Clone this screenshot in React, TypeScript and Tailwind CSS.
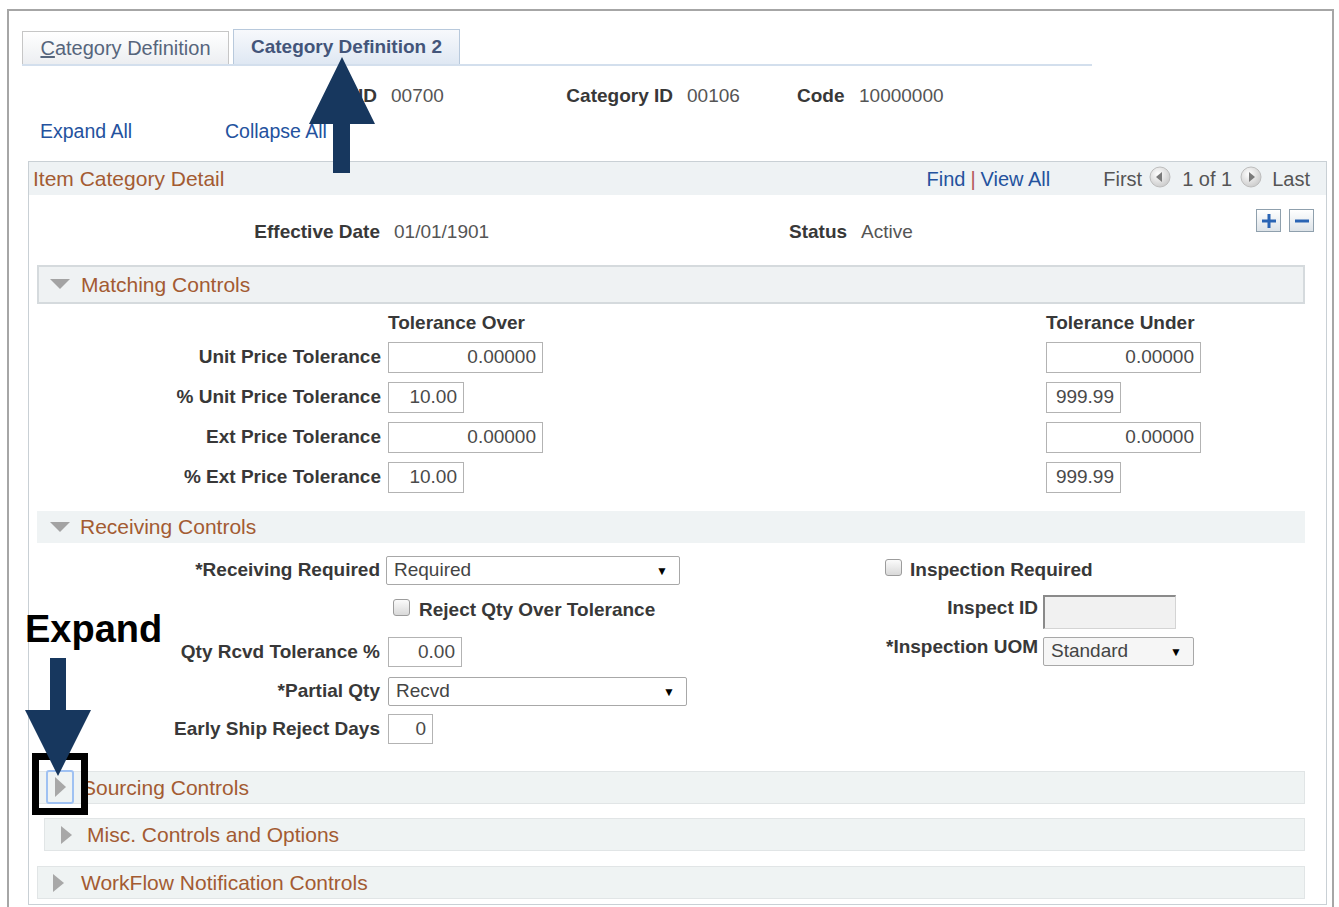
import React from "react";

const SECTION = "text-[#a35b32]";
const LINK = "text-[#24529e]";

function DownTri() {
  return (
    <svg width="20" height="11" viewBox="0 0 20 11" className="shrink-0">
      <polygon points="0,0 20,0 10,10" fill="#a3a3a3" />
    </svg>
  );
}

function RightTri({ h = 20 }: { h?: number }) {
  return (
    <svg width="11" height={h} viewBox={`0 0 11 ${h}`} className="shrink-0">
      <polygon points={`0,0 11,${h / 2} 0,${h}`} fill="#a8a8a8" />
    </svg>
  );
}

function NavCircle({ dir }: { dir: "left" | "right" }) {
  return (
    <svg width="22" height="22" viewBox="0 0 22 22" className="shrink-0 -mt-[4px]">
      <defs>
        <radialGradient id={`nc-${dir}`} cx="40%" cy="35%" r="70%">
          <stop offset="0%" stopColor="#ffffff" />
          <stop offset="100%" stopColor="#c9c9c9" />
        </radialGradient>
      </defs>
      <circle cx="11" cy="11" r="10" fill={`url(#nc-${dir})`} stroke="#bdbdbd" strokeWidth="1" />
      {dir === "left" ? (
        <polygon points="13,6 13,16 7,11" fill="#7a7a7a" />
      ) : (
        <polygon points="9,6 9,16 15,11" fill="#7a7a7a" />
      )}
    </svg>
  );
}

function Box({ w, value }: { w: number; value: string }) {
  return (
    <div
      className="h-full border border-[#b3b3b3] bg-white flex items-center justify-end pr-[6px] text-[19px] text-[#4a4a4a] shrink-0"
      style={{ width: w }}
    >
      {value}
    </div>
  );
}

function Select({ w, value, grey }: { w: number; value: string; grey?: boolean }) {
  return (
    <div
      className={`h-full border border-[#a8a8a8] rounded-[2px] flex items-center justify-between pl-[7px] pr-[11px] text-[19px] text-[#444] shrink-0 ${
        grey ? "bg-[#f6f6f6]" : "bg-white"
      }`}
      style={{ width: w }}
    >
      <span>{value}</span>
      <span className="text-[12px] text-black">▼</span>
    </div>
  );
}

function Check({ className = "" }: { className?: string }) {
  return (
    <div
      className={`w-[17px] h-[17px] rounded-[3px] border border-[#9c9c9c] bg-linear-to-b from-[#fbfbfb] to-[#d9d9d9] shrink-0 ${className}`}
    />
  );
}

function Label({ w, children, className = "" }: { w: number; children: React.ReactNode; className?: string }) {
  return (
    <div
      className={`text-right font-bold text-[19px] text-[#383838] shrink-0 ${className}`}
      style={{ width: w }}
    >
      {children}
    </div>
  );
}

const matchRows = [
  { label: "Unit Price Tolerance", over: "0.00000", under: "0.00000", wide: true },
  { label: "% Unit Price Tolerance", over: "10.00", under: "999.99", wide: false },
  { label: "Ext Price Tolerance", over: "0.00000", under: "0.00000", wide: true },
  { label: "% Ext Price Tolerance", over: "10.00", under: "999.99", wide: false },
];

export default function App() {
  return (
    <div className="relative w-[1339px] h-[907px] overflow-hidden bg-white font-['Liberation_Sans',Arial,sans-serif] text-[#444]">
      <div className="pt-[9px] pl-[7px]">
        <div className="w-[1327px] h-[898px] border-l-2 border-t-2 border-r-2 border-[#a6a6a6]">
          {/* page tabs */}
          <div className="mt-[18px] ml-[13px] w-[1070px] flex items-end border-b-2 border-[#d3dfed]">
            <div className="w-[207px] h-[33px] border border-b-0 border-[#c6c6c6] bg-linear-to-b from-white to-[#eceef1] flex items-center justify-center text-[20px] text-[#56657c]">
              <span>
                <span className="underline">C</span>ategory Definition
              </span>
            </div>
            <div className="ml-[4px] w-[227px] h-[35px] border border-b-0 border-[#b8c9dc] bg-linear-to-b from-[#f7f9fc] to-[#dfe8f3] flex items-center justify-center text-[19px] font-bold text-[#43557a]">
              Category Definition 2
            </div>
          </div>

          {/* key fields */}
          <div className="mt-[19px] h-[22px] flex items-center text-[19px]">
            <Label w={368}>SetID</Label>
            <span className="ml-[14px] w-[175px] text-[#555]">00700</span>
            <Label w={107}>Category ID</Label>
            <span className="ml-[14px] w-[110px] text-[#555]">00106</span>
            <Label w={46}>Code</Label>
            <span className="ml-[16px] text-[#555]">10000000</span>
          </div>

          <div className={`mt-[14px] h-[22px] flex items-center text-[19px] ${LINK}`}>
            <span className="ml-[31px] w-[185px] text-[19.5px]">Expand All</span>
            <span className="text-[19.5px]">Collapse All</span>
          </div>

          {/* item category detail panel */}
          <div className="mt-[18px] ml-[19px] w-[1299px] h-[744px] border border-[#c9d0d5]">
            <div className="h-[33px] bg-[#eef2f4] flex items-center pl-[4px] pr-[16px]">
              <span className={`text-[21px] ${SECTION}`}>Item Category Detail</span>
              <div className="ml-auto flex items-center text-[20px] text-[#555]">
                <span className={LINK}>Find</span>
                <span className="mx-[5px] text-[#b4545a]">|</span>
                <span className={LINK}>View All</span>
                <span className="ml-[53px]">First</span>
                <span className="ml-[7px] flex">
                  <NavCircle dir="left" />
                </span>
                <span className="ml-[11px]">1 of 1</span>
                <span className="ml-[8px] flex">
                  <NavCircle dir="right" />
                </span>
                <span className="ml-[10px]">Last</span>
              </div>
            </div>

            <div className="pl-[8px] pr-[21px]">
              {/* effective date row */}
              <div className="h-[70px] flex items-start">
                <div className="mt-[26px] h-[22px] flex items-center text-[19px]">
                  <Label w={343}>Effective Date</Label>
                  <span className="ml-[14px] w-[395px] text-[#555]">01/01/1901</span>
                  <span className="font-bold text-[#383838]">Status</span>
                  <span className="ml-[14px] text-[#555]">Active</span>
                </div>
                <div className="ml-auto -mr-[9px] mt-[14px] flex gap-[8px]">
                  <div className="w-[25px] h-[23px] border border-[#8fa0ad] bg-linear-to-b from-white to-[#dde3e8] flex items-center justify-center">
                    <svg width="14" height="14" viewBox="0 0 14 14">
                      <rect x="5.5" y="0" width="3" height="14" fill="#2a64b4" />
                      <rect x="0" y="5.5" width="14" height="3" fill="#2a64b4" />
                    </svg>
                  </div>
                  <div className="w-[25px] h-[23px] border border-[#8fa0ad] bg-linear-to-b from-white to-[#dde3e8] flex items-center justify-center">
                    <svg width="14" height="14" viewBox="0 0 14 14">
                      <rect x="0" y="5.5" width="14" height="3" fill="#2a64b4" />
                    </svg>
                  </div>
                </div>
              </div>

              {/* matching controls */}
              <div className="h-[39px] border-2 border-[#d5dadd] bg-[#eff2f3] flex items-center pl-[11px]">
                <DownTri />
                <span className={`ml-[11px] text-[21px] ${SECTION}`}>Matching Controls</span>
              </div>

              <div className="h-[38px] flex items-center font-bold text-[19px] text-[#383838]">
                <span className="ml-[351px] w-[658px]">Tolerance Over</span>
                <span>Tolerance Under</span>
              </div>

              <div className="flex flex-col gap-[9px]">
                {matchRows.map((r) => (
                  <div key={r.label} className="h-[31px] flex items-center">
                    <Label w={344}>{r.label}</Label>
                    <div className="ml-[7px] w-[658px] h-full">
                      <Box w={r.wide ? 155 : 76} value={r.over} />
                    </div>
                    <div className="h-full">
                      <Box w={r.wide ? 155 : 75} value={r.under} />
                    </div>
                  </div>
                ))}
              </div>

              {/* receiving controls */}
              <div className="mt-[18px] h-[32px] bg-[#eff3f4] flex items-center pl-[13px]">
                <DownTri />
                <span className={`ml-[10px] text-[21px] ${SECTION}`}>Receiving Controls</span>
              </div>

              <div className="mt-[13px] flex">
                <div className="w-[823px] flex flex-col">
                  <div className="h-[29px] flex items-center">
                    <Label w={343}>*Receiving Required</Label>
                    <div className="ml-[6px] h-full">
                      <Select w={294} value="Required" />
                    </div>
                  </div>
                  <div className="mt-[10px] h-[30px] flex items-center">
                    <Check className="ml-[356px] -mt-[6px]" />
                    <span className="ml-[9px] font-bold text-[19px] text-[#383838]">
                      Reject Qty Over Tolerance
                    </span>
                  </div>
                  <div className="mt-[12px] h-[30px] flex items-center">
                    <Label w={343}>Qty Rcvd Tolerance %</Label>
                    <div className="ml-[8px] h-full">
                      <Box w={74} value="0.00" />
                    </div>
                  </div>
                  <div className="mt-[10px] h-[29px] flex items-center">
                    <Label w={343}>*Partial Qty</Label>
                    <div className="ml-[8px] h-full">
                      <Select w={299} value="Recvd" />
                    </div>
                  </div>
                  <div className="mt-[8px] h-[30px] flex items-center">
                    <Label w={343}>Early Ship Reject Days</Label>
                    <div className="ml-[8px] h-full">
                      <Box w={45} value="0" />
                    </div>
                  </div>
                </div>

                <div className="flex flex-col">
                  <div className="h-[29px] flex items-center">
                    <Check className="ml-[25px] -mt-[6px]" />
                    <span className="ml-[8px] font-bold text-[19px] text-[#383838]">
                      Inspection Required
                    </span>
                  </div>
                  <div className="mt-[10px] h-[34px] flex items-center">
                    <Label w={178} className="-mt-[8px]">
                      Inspect ID
                    </Label>
                    <div className="ml-[5px] w-[133px] h-full bg-[#f1f1f1] border-t-2 border-l-2 border-b border-r border-t-[#8a8a8a] border-l-[#8a8a8a] border-b-[#d4d4d4] border-r-[#d4d4d4]" />
                  </div>
                  <div className="mt-[8px] h-[29px] flex items-center">
                    <Label w={178} className="-mt-[8px]">
                      *Inspection UOM
                    </Label>
                    <div className="ml-[5px] h-full">
                      <Select w={151} value="Standard" grey />
                    </div>
                  </div>
                </div>
              </div>

              {/* collapsed sections */}
              <div className="mt-[27px] h-[33px] border border-[#e1e5e6] bg-[#eff3f3] flex items-center pl-[8px]">
                <span className="w-[28px] h-[34px] -mt-[1px] rounded-[3px] border-2 border-[#9fc1f2] flex items-center justify-center">
                  <RightTri />
                </span>
                <span className={`ml-[8px] text-[21px] ${SECTION}`}>Sourcing Controls</span>
              </div>
              <div className="mt-[14px] ml-[7px] h-[33px] border border-[#e1e5e6] bg-[#eff3f3] flex items-center pl-[16px]">
                <RightTri h={18} />
                <span className={`ml-[15px] text-[21px] ${SECTION}`}>Misc. Controls and Options</span>
              </div>
              <div className="mt-[15px] h-[33px] border border-[#e1e5e6] bg-[#eff3f3] flex items-center pl-[15px]">
                <RightTri h={18} />
                <span className={`ml-[17px] text-[21px] ${SECTION}`}>WorkFlow Notification Controls</span>
              </div>
            </div>
          </div>
        </div>
      </div>

      {/* callout: arrow pointing at the second tab */}
      <svg className="absolute left-[309px] top-[57px]" width="66" height="116" viewBox="0 0 66 116">
        <polygon points="33,0 66,67 41,67 41,116 24,116 24,67 0,67" fill="#17375e" />
      </svg>

      {/* callout: expand marker */}
      <div className="absolute left-[25px] top-[607px] text-[38px] leading-[44px] font-bold text-black">
        Expand
      </div>
      <div className="absolute left-[32px] top-[753px] w-[56px] h-[62px] border-[7px] border-black" />
      <svg className="absolute left-[25px] top-[658px]" width="66" height="118" viewBox="0 0 66 118">
        <polygon points="25,0 41,0 41,52 66,52 33,118 0,52 25,52" fill="#17375e" />
      </svg>
    </div>
  );
}
